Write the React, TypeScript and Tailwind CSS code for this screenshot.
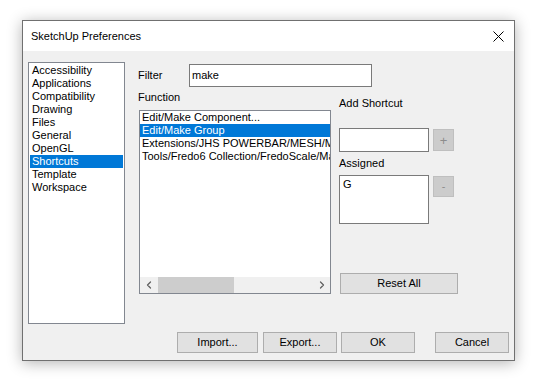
import { ChevronLeft, ChevronRight } from "lucide-react"

const pages = ["Accessibility", "Applications", "Compatibility", "Drawing", "Files", "General", "OpenGL", "Shortcuts", "Template", "Workspace"]

const functions = [
  "Edit/Make Component...",
  "Edit/Make Group",
  "Extensions/JHS POWERBAR/MESH/Mesh",
  "Tools/Fredo6 Collection/FredoScale/Make",
]

function Button({ label, className = "" }: { label: string; className?: string }) {
  return (
    <div className={`flex h-[21px] items-center justify-center border border-[#adadad] bg-[#e1e1e1] ${className}`}>
      {label}
    </div>
  )
}

export default function App() {
  return (
    <div className="min-h-screen bg-white pl-[22px] pt-[20px] font-['Liberation_Sans',Arial,sans-serif] text-[11px] leading-[13px] text-black">
      <div className="flex h-[341px] w-[493px] flex-col border border-[#707070] bg-[#f0f0f0] shadow-[0_2px_14px_rgba(0,0,0,0.3)]">
        {/* title bar */}
        <div className="flex h-[30px] items-center justify-between bg-white pl-[8px] pr-[10px]">
          <span className="text-[11px]">SketchUp Preferences</span>
          <svg width="11" height="11" viewBox="0 0 11 11">
            <path d="M0.5 0.5 L10.5 10.5 M10.5 0.5 L0.5 10.5" stroke="#000" strokeWidth="1" />
          </svg>
        </div>

        <div className="flex flex-1 flex-col px-[5px] pt-[11px]">
          <div className="flex">
            {/* page list */}
            <div className="h-[262px] w-[97px] border border-[#828790] bg-white py-[1px]">
              {pages.map((p) => (
                <div
                  key={p}
                  className={`mx-[1px] h-[13px] pl-[2px] whitespace-nowrap ${p === "Shortcuts" ? "bg-[#0078d7] text-white" : ""}`}
                >
                  {p}
                </div>
              ))}
            </div>

            {/* shortcuts page */}
            <div className="ml-[13px] flex flex-col">
              <div className="mt-[2px] flex items-center">
                <span className="w-[51px]">Filter</span>
                <div className="flex h-[23px] w-[183px] items-center border border-[#7a7a7a] bg-white pl-[2px]">make</div>
              </div>

              <div className="flex">
                <div className="flex flex-col">
                  <span className="mt-[4px] h-[13px]">Function</span>
                  <div className="ml-[1px] mt-[6px] flex h-[184px] w-[192px] flex-col border border-[#828790] bg-white">
                    <div className="flex-1 overflow-hidden">
                      {functions.map((f, i) => (
                        <div
                          key={f}
                          className={`h-[13px] pl-[2px] whitespace-nowrap ${i === 1 ? "bg-[#0078d7] text-white" : ""}`}
                        >
                          {f}
                        </div>
                      ))}
                    </div>
                    <div className="flex h-[16px] items-center bg-[#f0f0f0]">
                      <div className="flex w-[17px] justify-center">
                        <ChevronLeft size={12} strokeWidth={2.5} className="text-[#606060]" />
                      </div>
                      <div className="ml-[1px] h-[16px] w-[76px] bg-[#cdcdcd]" />
                      <div className="flex-1" />
                      <div className="flex w-[17px] justify-center">
                        <ChevronRight size={12} strokeWidth={2.5} className="text-[#606060]" />
                      </div>
                    </div>
                  </div>
                </div>

                <div className="ml-[8px] flex flex-col">
                  <span className="mt-[10px] h-[13px]">Add Shortcut</span>
                  <div className="mt-[18px] flex items-start">
                    <div className="h-[24px] w-[90px] border border-[#7a7a7a] bg-white" />
                    <div className="ml-[4px] mt-[1px] flex h-[22px] w-[21px] items-center justify-center border border-[#bfbfbf] bg-[#cccccc] text-[13px] text-[#8c8c8c]">
                      +
                    </div>
                  </div>
                  <span className="mt-[5px] h-[13px]">Assigned</span>
                  <div className="mt-[5px] flex items-start">
                    <div className="h-[49px] w-[90px] border border-[#7a7a7a] bg-white pl-[3px] pt-[2px]">G</div>
                    <div className="ml-[4px] mt-[1px] flex h-[21px] w-[21px] items-center justify-center border border-[#bfbfbf] bg-[#cccccc] text-[#8c8c8c]">
                      -
                    </div>
                  </div>
                  <Button label="Reset All" className="ml-[1px] mt-[49px] w-[118px]" />
                </div>
              </div>
            </div>
          </div>

          {/* footer buttons */}
          <div className="mt-[8px] flex">
            <Button label="Import..." className="ml-[149px] w-[81px]" />
            <Button label="Export..." className="ml-[5px] w-[74px]" />
            <Button label="OK" className="ml-[4px] w-[74px]" />
            <Button label="Cancel" className="ml-[20px] w-[74px]" />
          </div>
        </div>
      </div>
    </div>
  )
}
